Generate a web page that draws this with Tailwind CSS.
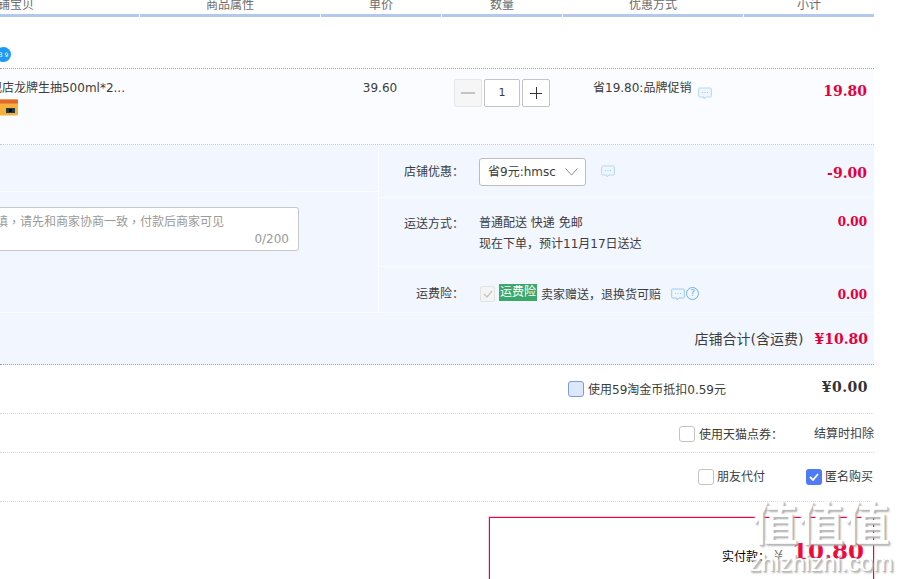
<!DOCTYPE html>
<html lang="zh">
<head>
<meta charset="UTF-8">
<script src="https://cdn.jsdelivr.net/npm/@tailwindcss/browser@4"></script>
<title>确认订单</title>
</head>
<body class="bg-white">
<div class="relative h-[579px] w-[901px] overflow-hidden font-['DejaVu_Sans','Noto_Sans_CJK_SC',sans-serif] text-[12px] text-[#3c3c3c]">
  <div class="w-[874px]">

    <!-- table head -->
    <div class="grid h-[17px] grid-cols-[140px_181px_121px_121px_181px_130px] overflow-hidden text-[#6c6c6c]">
      <div class="mr-px flex h-[17px] items-end justify-end border-b-[3px] border-[#b2c8ec] pr-[105px]"><span class="mb-[2px] whitespace-nowrap leading-[14px]">铺宝贝</span></div>
      <div class="mr-px h-[17px] border-b-[3px] border-[#b2c8ec] text-center leading-[14px]"><span class="relative top-[-2px]">商品属性</span></div>
      <div class="mr-px h-[17px] border-b-[3px] border-[#b2c8ec] text-center leading-[14px]"><span class="relative top-[-2px]">单价</span></div>
      <div class="mr-px h-[17px] border-b-[3px] border-[#b2c8ec] text-center leading-[14px]"><span class="relative top-[-2px]">数量</span></div>
      <div class="mr-px h-[17px] border-b-[3px] border-[#b2c8ec] text-center leading-[14px]"><span class="relative top-[-2px]">优惠方式</span></div>
      <div class="h-[17px] border-b-[3px] border-[#b2c8ec] text-center leading-[14px]"><span class="relative top-[-2px]">小计</span></div>
    </div>

    <!-- shop row -->
    <div class="flex h-[52px] items-end border-b border-dotted border-[#9a9ac0] pb-[6px]">
      <div class="-ml-[4px] flex h-[15px] w-[15px] items-center justify-center rounded-full bg-[#1d9bf5] text-[6px] text-white">3 9</div>
    </div>

    <!-- item row -->
    <div class="grid h-[76px] grid-cols-[140px_181px_121px_121px_181px_130px] border-b border-dotted border-[#c8c8d0] bg-[#fbfcff]">
      <div class="pt-[11px]">
        <div class="flex w-[125px] justify-end overflow-hidden whitespace-nowrap leading-[16px]">旗舰店龙牌生抽500ml*2...</div>
        <svg class="mt-[3px] block" width="18" height="17" viewBox="0 0 18 17">
          <rect x="-6" y="0.5" width="24" height="16" rx="1.500" fill="#f5b13c"/>
          <rect x="-6" y="0.5" width="24" height="4" fill="#e2682b"/>
          <rect x="6" y="9" width="9" height="5" fill="#1c3a4a"/>
          <rect x="9" y="10" width="3" height="3" fill="#0a0a0a"/>
        </svg>
      </div>
      <div></div>
      <div class="pr-[3px] pt-[11px] text-center leading-[16px]">39.60</div>
      <div class="flex items-start gap-[2px] pl-[12px] pt-[10px]">
        <div class="flex h-[28px] w-[28px] items-center justify-center rounded-[2px] border border-[#e6e6e6] bg-[#f6f6f6]"><span class="h-[1.500px] w-[14px] bg-[#c4c4c4]"></span></div>
        <div class="flex h-[28px] w-[36px] items-center justify-center rounded-[2px] border border-[#c4c4c4] bg-white text-[11px]">1</div>
        <div class="relative flex h-[28px] w-[28px] items-center justify-center rounded-[2px] border border-[#c4c4c4] bg-white"><span class="h-px w-[12px] bg-[#333]"></span><span class="absolute h-[12px] w-px bg-[#333]"></span></div>
      </div>
      <div class="flex items-start pl-[30px] pt-[11px] leading-[16px]">
        <span class="whitespace-nowrap">省19.80:品牌促销</span>
        <svg class="ml-[7px] mt-[7px] shrink-0" width="14" height="13" viewBox="0 0 14 13"><path d="M1.500 1h11a.8.8 0 0 1 .8.8v7.400a.8.8 0 0 1-.8.8H8l-2 2v-2H1.500a.8.8 0 0 1-.8-.8V1.800a.8.8 0 0 1 .8-.8z" fill="#eef6ff" stroke="#b5d8f5"/><path d="M4 5.500h1M6.500 5.500h1M9 5.500h1" stroke="#9cc8ee"/></svg>
      </div>
      <div class="pr-[7px] pt-[14px] text-right font-['DejaVu_Serif',serif] text-[14px] font-bold leading-[16px] text-[#e4003a]">19.80</div>
    </div>

    <!-- shop options -->
    <div class="flex h-[220px] border-b border-dotted border-[#9a9ac0] bg-[#f2f6ff]">
      <div class="flex w-[378px] flex-col">
        <div class="h-[47px] border-b border-white/80"></div>
        <div class="h-[121px] border-b border-white/80 pt-[15px]">
          <div class="relative h-[44px] w-[299px] rounded-r-[3px] border border-l-0 border-[#c8c8c8] bg-white text-[#9a9a9a]">
            <div class="flex w-[224px] justify-end overflow-hidden whitespace-nowrap pt-[6px] leading-[16px]">选填<span class="font-['Noto_Sans_CJK_TC']">，</span>请先和商家协商一致<span class="font-['Noto_Sans_CJK_TC']">，</span>付款后商家可见</div>
            <div class="absolute bottom-[3px] right-[9px] leading-[16px]">0/200</div>
          </div>
        </div>
      </div>
      <div class="w-[496px] border-l border-white/80">
        <!-- coupon -->
        <div class="flex h-[53px] items-start border-b border-white/60">
          <div class="w-[85px] whitespace-nowrap pt-[18px] text-right leading-[16px]">店铺优惠<span class="font-['Noto_Sans_CJK_TC']">：</span></div>
          <div class="ml-[15px] mt-[13px] flex h-[28px] w-[107px] items-center justify-between rounded-[3px] border border-[#bdbdbd] bg-white pl-[8px] pr-[7px]">
            <span class="whitespace-nowrap">省9元:hmsc</span>
            <svg width="13" height="8" viewBox="0 0 13 8"><path d="M.5.500l6 6.500 6-6.500" fill="none" stroke="#8a8a8a"/></svg>
          </div>
          <svg class="ml-[15px] mt-[20px]" width="14" height="13" viewBox="0 0 14 13"><path d="M1.500 1h11a.8.8 0 0 1 .8.8v7.400a.8.8 0 0 1-.8.8H8l-2 2v-2H1.500a.8.8 0 0 1-.8-.8V1.800a.8.8 0 0 1 .8-.8z" fill="#eef6ff" stroke="#b5d8f5"/><path d="M4 5.500h1M6.500 5.500h1M9 5.500h1" stroke="#9cc8ee"/></svg>
          <div class="ml-auto pr-[7px] pt-[20px] font-['DejaVu_Serif',serif] text-[14px] font-bold leading-[16px] text-[#e4003a]">-9.00</div>
        </div>
        <!-- shipping -->
        <div class="flex h-[69px] items-start border-b border-white/60">
          <div class="w-[85px] whitespace-nowrap pt-[17px] text-right leading-[16px]">运送方式<span class="font-['Noto_Sans_CJK_TC']">：</span></div>
          <div class="ml-[15px] pt-[16px] leading-[19px]">
            <div>普通配送 快递 免邮</div>
            <div>现在下单<span class="font-['Noto_Sans_CJK_TC']">，</span>预计11月17日送达</div>
          </div>
          <div class="ml-auto pr-[7px] pt-[16px] font-['DejaVu_Serif',serif] text-[12px] font-bold leading-[16px] text-[#e4003a]">0.00</div>
        </div>
        <!-- insurance -->
        <div class="flex h-[46px] items-start border-b border-white/60">
          <div class="w-[85px] whitespace-nowrap pt-[18px] text-right leading-[16px]">运费险<span class="font-['Noto_Sans_CJK_TC']">：</span></div>
          <div class="ml-[16px] mt-[19px] flex h-[16px] w-[15px] items-center justify-center rounded-[2px] border border-[#e3e3e3] bg-[#f4f4f4]">
            <svg width="10" height="8" viewBox="0 0 10 8"><path d="M1 4l3 3 5-6" fill="none" stroke="#c4c4c4" stroke-width="1.300"/></svg>
          </div>
          <div class="ml-[4px] mt-[17px] h-[17px] w-[38px] bg-[#3ba76a] text-center leading-[16px] text-white">运费险</div>
          <div class="ml-[4px] mt-[19px] whitespace-nowrap leading-[16px]">卖家赠送<span class="font-['Noto_Sans_CJK_TC']">，</span>退换货可赔</div>
          <svg class="ml-[10px] mt-[21px]" width="14" height="13" viewBox="0 0 14 13"><path d="M1.500 1h11a.8.8 0 0 1 .8.8v7.400a.8.8 0 0 1-.8.8H8l-2 2v-2H1.500a.8.8 0 0 1-.8-.8V1.800a.8.8 0 0 1 .8-.8z" fill="#eef6ff" stroke="#9cc8ee"/><path d="M4 5.500h1M6.500 5.500h1M9 5.500h1" stroke="#9cc8ee"/></svg>
          <div class="ml-px mt-[20px] flex h-[13px] w-[13px] items-center justify-center rounded-full border border-[#6fb1e8] text-[9px] leading-none text-[#6fb1e8]">?</div>
          <div class="ml-auto pr-[7px] pt-[20px] font-['DejaVu_Serif',serif] text-[12px] font-bold leading-[16px] text-[#e4003a]">0.00</div>
        </div>
      </div>
    </div>
  </div>

  <!-- overlaps the left/right split: the shop total strip -->
  <div class="absolute left-0 top-[313px] flex h-[51px] w-[874px] items-center justify-end gap-[11px] bg-[#f2f6ff] pr-[6px] pt-[1px]">
    <span class="text-[14px] leading-[20px] text-[#3c3c3c]">店铺合计(含运费)</span>
    <span class="font-['DejaVu_Serif',serif] text-[14px] font-bold text-[#e4003a]">¥10.80</span>
  </div>

  <div class="w-[874px]">
    <!-- coins -->
    <div class="flex h-[49px] items-start border-b border-dotted border-[#d8d8d8] pl-[568px]">
      <div class="mt-[16px] h-[16px] w-[16px] rounded-[3px] border border-[#7a9cd8] bg-[#dce7fb]"></div>
      <span class="ml-[4px] mt-[17px] whitespace-nowrap leading-[16px]">使用59淘金币抵扣0.59元</span>
      <span class="ml-auto pr-[6px] pt-[14px] font-['DejaVu_Serif',serif] text-[14px] font-bold leading-[16px] tracking-[0.500px] text-[#333]">¥0.00</span>
    </div>
    <!-- coupons -->
    <div class="flex h-[39px] items-start justify-end border-b border-dotted border-[#d8d8d8]">
      <div class="mt-[12px] h-[16px] w-[16px] rounded-[3px] border border-[#c4c4c4] bg-white"></div>
      <span class="ml-[4px] mt-[12px] w-[115px] whitespace-nowrap leading-[16px]">使用天猫点券<span class="font-['Noto_Sans_CJK_TC']">：</span></span>
      <span class="mt-[12px] whitespace-nowrap text-right leading-[16px]">结算时扣除</span>
    </div>
    <!-- friends and anonymous -->
    <div class="flex h-[49px] items-start justify-end border-b border-dotted border-[#d8d8d8] pr-px">
      <div class="mt-[16px] h-[16px] w-[16px] rounded-[3px] border border-[#c4c4c4] bg-white"></div>
      <span class="ml-[3px] mt-[16px] leading-[16px]">朋友代付</span>
      <div class="ml-[41px] mt-[16px] flex h-[16px] w-[16px] items-center justify-center rounded-[3px] bg-[#4d7cf4]">
        <svg width="10" height="8" viewBox="0 0 10 8"><path d="M1 4l3 3 5-6" fill="none" stroke="#fff" stroke-width="1.800"/></svg>
      </div>
      <span class="ml-[3px] mt-[16px] leading-[16px]">匿名购买</span>
    </div>
    <!-- pay box -->
    <div class="ml-[489px] mt-[15px] h-[120px] w-[385px] border border-solid border-[#f0003c] bg-white shadow-[0_0_0_1px_rgba(255,0,60,0.18)]">
      <div class="flex items-end justify-end pr-[9px] pt-[21px]">
        <span class="-mb-[3px] text-black">实付款<span class="font-['Noto_Sans_CJK_TC']">：</span></span>
        <span class="-mb-[3px] ml-[4px] text-[14px] text-[#777]">¥</span>
        <span class="ml-[9px] font-['DejaVu_Serif',serif] text-[23px] font-bold leading-[24px] text-[#f00a3c]">10.80</span>
      </div>
    </div>
  </div>

  <!-- watermark -->
  <div class="pointer-events-none absolute left-[749px] top-[490px] text-center text-white [text-shadow:1px_1px_0_#bbb,2px_2px_2px_#aaa]">
    <div class="font-['Noto_Sans_CJK_SC',sans-serif] text-[46px] font-medium leading-[60px]">值值值</div>
    <div class="font-['Liberation_Sans',sans-serif] text-[24px] leading-[26px]">zhizhizhi.com</div>
  </div>
</div>
</body>
</html>
